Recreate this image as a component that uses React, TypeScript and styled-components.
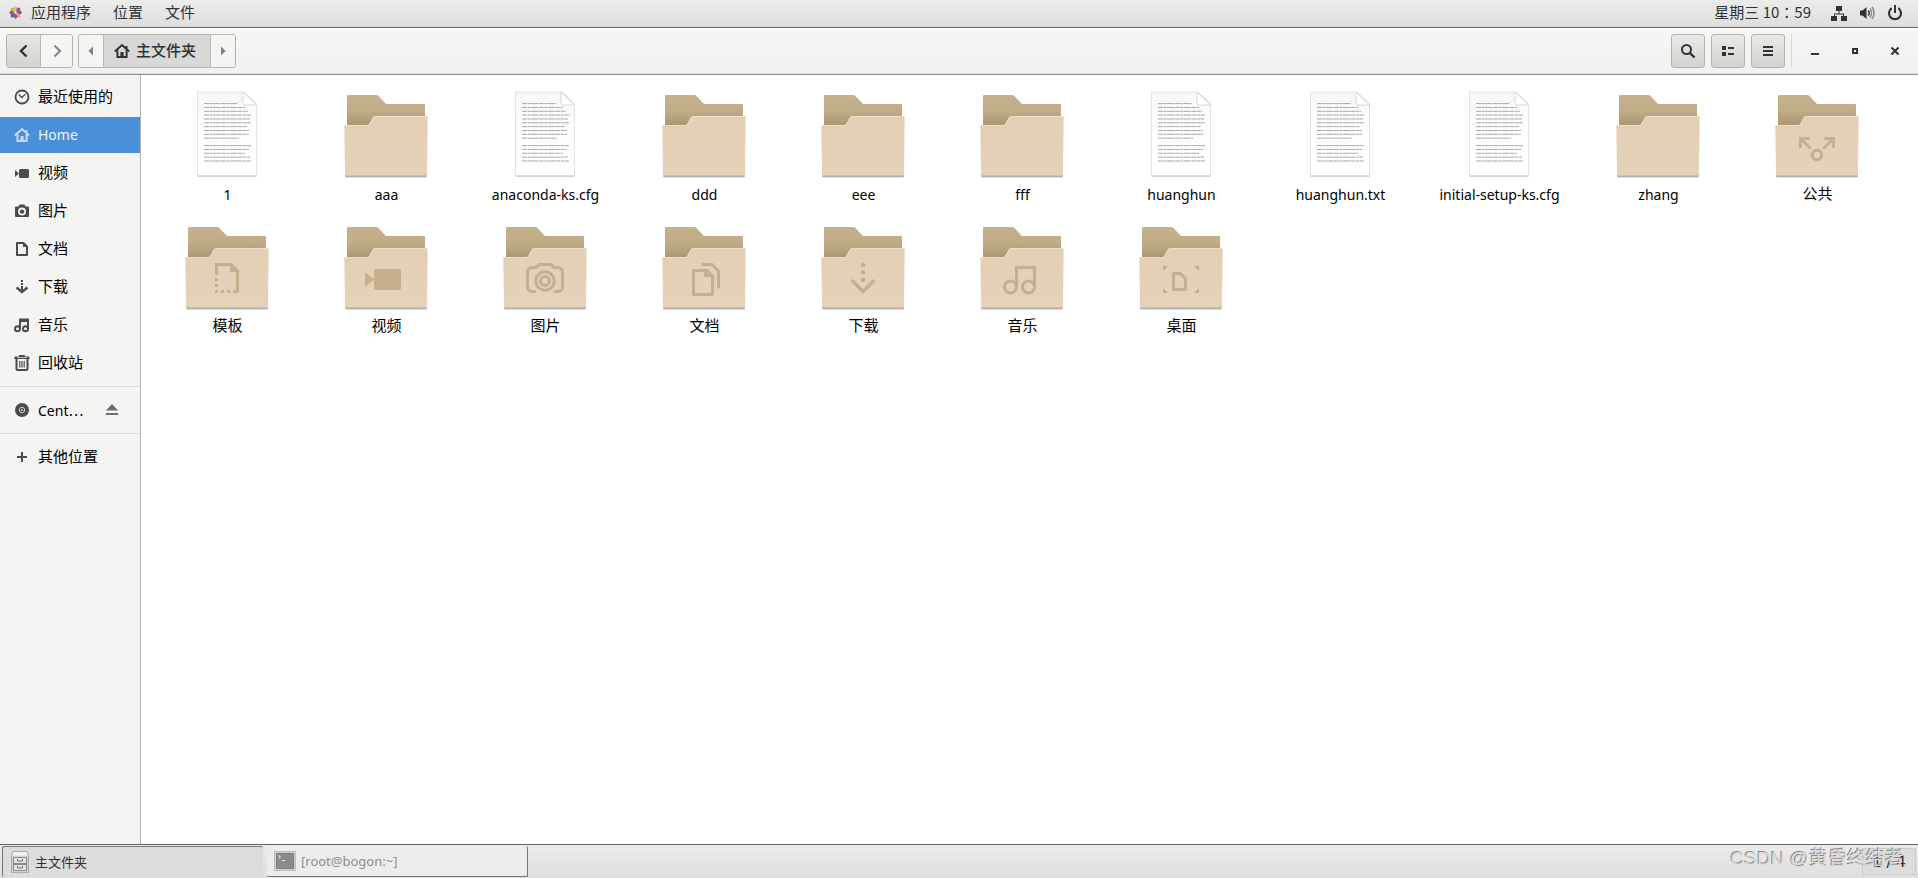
import React from "react";
import styled, { createGlobalStyle } from "styled-components";

const Global = createGlobalStyle`
  *{box-sizing:border-box}
  body{margin:0;background:#fff;color:#000;font:13px/20px "Noto Sans","Noto Sans CJK SC",sans-serif}
  button{font:inherit;color:inherit;margin:0;padding:0;border:0;background:none}
  ul{margin:0;padding:0;list-style:none}
  a{color:inherit;text-decoration:none}
  svg{display:block;flex:none}
`;

const ink = "#2e3436";

const Desktop = styled.div`
  min-height: 100vh;
  display: flex;
  flex-direction: column;
`;
const TopBar = styled.header`
  height: 28px;
  display: flex;
  align-items: center;
  justify-content: space-between;
  padding: 0 15px 2px 8px;
  background: linear-gradient(#ececec, #dedede);
  border-bottom: 1px solid #666263;
  color: ${ink};
  font-size: 15px;
`;
const Label = styled.span`
  padding-bottom: 2px;
`;
const MenuGroup = styled.nav`
  display: flex;
  align-items: center;
  gap: 22px;
`;
const MenuButton = styled.button`
  display: flex;
  align-items: center;
  gap: 8px;
`;
const Status = styled.div`
  display: flex;
  align-items: center;
  gap: 12px;
`;
const Clock = styled.button`
  margin-right: 8px;
  padding-bottom: 2px;
  font-family: "Noto Sans CJK TC", sans-serif;
`;
const HeaderBar = styled.div`
  height: 47px;
  display: flex;
  align-items: center;
  padding: 0 3px 1px 6px;
  background: linear-gradient(#f6f6f5, #f1f1f0);
  border-top: 1px solid #fff;
  border-bottom: 1px solid #8f8f8d;
  box-shadow: inset 0 -1px #dededc;
  color: ${ink};
`;
const Linked = styled.div`
  display: flex;
  height: 34px;
  margin-right: 5px;
  border: 1px solid #b3b3ac;
  border-radius: 3px;
  overflow: hidden;
`;
const LinkedButton = styled.button<{ $w: number; $look?: "raised" | "active" }>`
  width: ${(p) => p.$w}px;
  display: flex;
  align-items: center;
  justify-content: center;
  gap: 6px;
  padding-right: ${(p) => (p.$look === "active" ? 4 : 0)}px;
  font-size: 15px;
  font-weight: 500;
  background: ${(p) =>
    p.$look === "raised"
      ? "linear-gradient(#e6e6e3, #d2d2cf)"
      : p.$look === "active"
      ? "#d8d8d6"
      : "#f4f4f3"};
  & + & {
    border-left: 1px solid #b9b9b3;
  }
`;
const Tools = styled.div`
  margin-left: auto;
  display: flex;
  align-items: center;
  gap: 6px;
`;
const ToolButton = styled.button`
  width: 34px;
  height: 34px;
  display: grid;
  place-items: center;
  border: 1px solid #b3b3ac;
  border-radius: 3px;
  background: linear-gradient(#e9e9e7, #d2d2cf);
`;
const WindowButtons = styled.div`
  height: 34px;
  display: flex;
  border-left: 1px solid #d9d9d6;
  padding-left: 3px;
`;
const WindowButton = styled.button`
  width: 40px;
  display: grid;
  place-items: center;
`;
const Body = styled.div`
  flex: 1;
  display: flex;
`;
const Sidebar = styled.nav`
  width: 141px;
  flex: none;
  padding-top: 4px;
  background: #f4f4f2;
  border-right: 1px solid #b6b6b1;
`;
const Places = styled.ul`
  display: flex;
  flex-direction: column;
  gap: 2px;
  & + & {
    margin-top: 5px;
    padding-top: 5px;
    border-top: 1px solid #dadad8;
  }
`;
const PlaceRow = styled.li<{ $selected?: boolean }>`
  height: 36px;
  display: flex;
  align-items: center;
  justify-content: space-between;
  padding: 0 20px 0 14px;
  background: ${(p) => (p.$selected ? "#4a90d9" : "transparent")};
  color: ${(p) => (p.$selected ? "#eef4fb" : "#000")};
  svg {
    color: ${(p) => (p.$selected ? "#c3daf3" : "#4b4b4b")};
  }
`;
const PlaceLink = styled.a`
  display: flex;
  align-items: center;
  gap: 8px;
`;
const PlaceName = styled.span<{ $latin: boolean }>`
  font-size: ${(p) => (p.$latin ? 14 : 15)}px;
  padding-bottom: ${(p) => (p.$latin ? 0 : 2)}px;
`;
const Dots = styled.span`
  font-family: "Noto Sans CJK SC", sans-serif;
`;
const Files = styled.main`
  flex: 1;
  display: grid;
  grid-template-columns: repeat(auto-fill, minmax(150px, 1fr));
  grid-auto-rows: 132px;
  align-content: start;
  padding: 12px 21px 0 7px;
`;
const FileItem = styled.button`
  display: flex;
  flex-direction: column;
  align-items: center;
  svg {
    margin-right: 1px;
  }
`;
const FileName = styled.span<{ $latin: boolean }>`
  padding-top: ${(p) => (p.$latin ? 2 : 0)}px;
  font-size: ${(p) => (p.$latin ? 14 : 15)}px;
  white-space: nowrap;
`;
const Taskbar = styled.footer`
  height: 34px;
  display: flex;
  align-items: center;
  gap: 4px;
  padding: 0 2px;
  background: linear-gradient(#ececec, #dedede);
  border-top: 1px solid #666263;
  color: ${ink};
`;
const Task = styled.button<{ $active?: boolean }>`
  width: 261px;
  height: 31px;
  display: flex;
  align-items: center;
  gap: 5px;
  padding-left: 7px;
  color: ${(p) => (p.$active ? ink : "#8b8d8e")};
  background: ${(p) => (p.$active ? "#dcdcdc" : "#ededed")};
  border-style: solid;
  border-color: #777576;
  border-width: ${(p) => (p.$active ? "1px 0 0 1px" : "0 1px 1px 0")};
  border-radius: 2px;
`;
const Tray = styled.div`
  margin-left: auto;
  position: relative;
`;
const Pager = styled.button`
  width: 54px;
  height: 27px;
  font: 15px/20px "DejaVu Sans", sans-serif;
  border: 1px solid #cbcbcb;
  background: #dcdcdc;
`;
const Watermark = styled.span`
  position: absolute;
  right: 12px;
  top: -2px;
  font: 19px/26px "Liberation Sans", "Noto Sans CJK SC", sans-serif;
  white-space: nowrap;
  color: #dadada;
  text-shadow: -1px -1px #8a8a8a;
  pointer-events: none;
`;
const Definitions = styled.svg`
  position: absolute;
`;

type IconProps = { children: React.ReactNode };
const Icon = ({ children }: IconProps) => (
  <svg width="16" height="16" viewBox="0 0 16 16" fill="currentColor" aria-hidden="true">
    {children}
  </svg>
);
const line = { fill: "none", stroke: "currentColor", strokeWidth: 2 } as const;

const homeShape = (
  <>
    <path {...line} d="M.8 8.4 8 2l7.2 6.4" />
    <path {...line} d="M3.400 7v7h9.200V7" />
    <path d="M6.400 9h3.200v5H6.400zM11.500 3h2v3l-2-1.500z" />
  </>
);

const placeIcons: Record<string, React.ReactNode> = {
  recent: (
    <>
      <circle cx="8" cy="8" r="6.5" {...line} strokeWidth={1.8} />
      <path {...line} strokeWidth={1.4} d="M4.800 5.600 7.700 8.500 11.300 5.300" />
    </>
  ),
  home: homeShape,
  video: <path d="M1 5v7l4-3.500zM6.500 4h7A1.500 1.500 0 0 1 15 5.500v6a1.500 1.500 0 0 1-1.500 1.500h-7A1.500 1.500 0 0 1 5 11.500v-6A1.500 1.500 0 0 1 6.500 4z" />,
  picture: (
    <>
      <path
        fillRule="evenodd"
        d="M5.500 1.500h5l1 2H14a1 1 0 0 1 1 1V13a1 1 0 0 1-1 1H2a1 1 0 0 1-1-1V4.500a1 1 0 0 1 1-1h2.500zM8 4.600a4 4 0 1 0 0 8 4 4 0 0 0 0-8z"
      />
      <circle cx="8" cy="8.6" r="2.2" />
    </>
  ),
  document: (
    <>
      <path {...line} strokeLinejoin="round" d="M3 2h6.500L13 5.500V14H3z" />
      <path d="M9 1.500V6h4.500z" />
    </>
  ),
  download: (
    <>
      <path d="M7 1h2v2H7zM7 4h2v2H7zM7 7h2v4H7z" />
      <path {...line} strokeWidth={2.4} d="M2.500 8.500 8 13l5.500-4.500" />
    </>
  ),
  music: (
    <>
      <circle cx="3.5" cy="11.7" r="2.5" {...line} />
      <circle cx="11.5" cy="11.7" r="2.5" {...line} />
      <path {...line} d="M6 12V2.500h8V12" />
      <path d="M6 2h8v3H6z" />
    </>
  ),
  trash: (
    <>
      <path d="M1 1.500h3.500L5.500 0h5l1 1.500H15l.8 2.500H.2z" />
      <path fill="#f4f4f2" d="M3 2.300h10v.7H3z" />
      <path {...line} d="M2.500 4v10a1 1 0 0 0 1 1h9a1 1 0 0 0 1-1V4" />
      <path d="M5.200 6h1.200v6.500H5.200zM7.400 6h1.200v6.500H7.400zM9.600 6h1.200v6.500H9.600z" />
    </>
  ),
  disc: (
    <>
      <circle cx="8" cy="8" r="7" />
      <circle cx="8" cy="8" r="2.7" fill="none" stroke="#c9c9c8" />
      <circle cx="8" cy="8" r="1" fill="#c9c9c8" />
    </>
  ),
  plus: <path d="M7 3h2v4h4v2H9v4H7V9H3V7h4z" />,
};

type Place = { icon: string; label: string; cut?: boolean };
const places: Place[][] = [
  [
    { icon: "recent", label: "最近使用的" },
    { icon: "home", label: "Home" },
    { icon: "video", label: "视频" },
    { icon: "picture", label: "图片" },
    { icon: "document", label: "文档" },
    { icon: "download", label: "下载" },
    { icon: "music", label: "音乐" },
    { icon: "trash", label: "回收站" },
  ],
  [{ icon: "disc", label: "Cent", cut: true }],
  [{ icon: "plus", label: "其他位置" }],
];

const emblemColor = "#c7ae8c";
const stroke = { fill: "none", stroke: emblemColor, strokeWidth: 3 } as const;
const emblems: Record<string, React.ReactNode> = {
  share: (
    <>
      <circle cx="48" cy="68" r="4.7" {...stroke} />
      <path {...stroke} d="M31.500 61v-9.500h9M33 53l8.500 8.500M64.500 61v-9.500h-9M63 53l-8.500 8.500" />
    </>
  ),
  template: (
    <>
      <path {...stroke} d="M37.500 56V45.500H52l6.500 6.500v20.500H54" />
      <path fill={emblemColor} d="M51 44v9h9zM36 59h3v3h-3zM36 65h3v3h-3zM36 71h3v3h-3zM42 71h3v3h-3zM48 71h3v3h-3z" />
    </>
  ),
  video: (
    <path fill={emblemColor} d="M27 53v15l9-7.500zM38 50h23a2 2 0 0 1 2 2v17a2 2 0 0 1-2 2H38a2 2 0 0 1-2-2V52a2 2 0 0 1 2-2z" />
  ),
  picture: (
    <>
      <path
        {...stroke}
        strokeLinecap="round"
        d="M38 72.500h-3a4.500 4.500 0 0 1-4.500-4.500V53a4.500 4.500 0 0 1 4.500-4.500h4l3-3h12l3 3h4a4.500 4.500 0 0 1 4.500 4.500v15a4.500 4.500 0 0 1-4.500 4.500h-3"
      />
      <circle cx="48" cy="62" r="9.2" {...stroke} />
      <circle cx="48" cy="62" r="4.5" {...stroke} />
    </>
  ),
  document: (
    <>
      <path {...stroke} strokeLinejoin="round" d="M37.500 51.500H51l5.500 5.500v18.500h-19z" />
      <path fill={emblemColor} d="M48 51v7h8z" />
      <path {...stroke} strokeLinecap="round" d="M47 45.500h9l6.500 6.500v16" />
    </>
  ),
  download: (
    <>
      <g fill={emblemColor}>
        <circle cx="48" cy="46" r="2.3" />
        <circle cx="48" cy="53.5" r="2.3" />
        <circle cx="48" cy="61" r="2.3" />
      </g>
      <path {...stroke} strokeWidth={3.5} strokeLinecap="round" d="M37.500 62 48 72.500 58.500 62" />
    </>
  ),
  music: (
    <>
      <circle cx="36.5" cy="68" r="6" {...stroke} />
      <circle cx="54.5" cy="68" r="6" {...stroke} />
      <path {...stroke} d="M42.500 68V48.500h18V68" />
    </>
  ),
  desktop: (
    <>
      <path fill={emblemColor} d="M30 47h5l-5 5zM66 47v5l-5-5zM30 74v-5l5 5zM66 74h-5l5-5z" />
      <path {...stroke} strokeLinejoin="round" d="M40.500 54.500h7l5 5v11h-12z" />
    </>
  ),
};

const Folder = ({ emblem }: { emblem?: string }) => (
  <svg width="96" height="96" viewBox="0 0 96 96" aria-hidden="true">
    <rect x="7" y="86" width="82" height="5" rx="1.5" fill="#000" opacity=".12" />
    <rect x="7" y="86" width="82" height="4" rx="1.5" fill="#000" opacity=".22" />
    <path fill="url(#folderBack)" d="M10 8h28.500q1 0 1.700.8L48 17h38q1 0 1 1v22H9V9q0-1 1-1z" />
    <path
      fill="url(#folderFront)"
      d="M7.500 38H29q1.500 0 2-1l4-7q.7-1 2-1h51.500q1.200 0 1.200 1.200L89 88q0 1-1 1H8q-1 0-1-1L6.300 39.200Q6.300 38 7.500 38z"
    />
    <path fill="none" stroke="#ecdec9" d="M7.300 38.500H29.500q1.500 0 2-1l4-7q.7-1 2-1h51" />
    <path fill="#d9be9e" d="M7 88h82q0 1-1 1H8q-1 0-1-1z" />
    {emblem && emblems[emblem]}
  </svg>
);

const firstParagraph = [34, 41, 44, 47, 46, 47, 43, 45, 45, 35];
const secondParagraph = [47, 45, 41, 46, 47];
const Document = () => (
  <svg width="96" height="96" viewBox="0 0 96 96" aria-hidden="true">
    <rect x="18" y="5" width="60" height="85" rx="1" fill="#000" opacity=".1" />
    <path fill="#a3a3a3" d="M18.500 88h59v1.200h-59z" />
    <path fill="url(#paper)" stroke="#dededd" strokeWidth=".8" d="M18.500 5H64l13.500 13v70.500h-59z" />
    <path fill="#fff" d="M64.500 4H79v13.500z" />
    <path fill="#fff" stroke="#cfcfce" strokeWidth=".8" d="M64 5v11.500q0 1.500 1.500 1.500h12z" />
    <g stroke="#a6a6a6" strokeWidth="1" strokeDasharray="5 .6 3 .5 7 .6">
      {firstParagraph.map((w, i) => (
        <path key={i} d={`M25 ${16.6 + i * 3.84}h${w}`} />
      ))}
      {secondParagraph.map((w, i) => (
        <path key={i} d={`M25 ${58.6 + i * 3.84}h${w}`} />
      ))}
    </g>
  </svg>
);

const files: [string, "doc" | "folder", string?][] = [
  ["1", "doc"],
  ["aaa", "folder"],
  ["anaconda-ks.cfg", "doc"],
  ["ddd", "folder"],
  ["eee", "folder"],
  ["fff", "folder"],
  ["huanghun", "doc"],
  ["huanghun.txt", "doc"],
  ["initial-setup-ks.cfg", "doc"],
  ["zhang", "folder"],
  ["公共", "folder", "share"],
  ["模板", "folder", "template"],
  ["视频", "folder", "video"],
  ["图片", "folder", "picture"],
  ["文档", "folder", "document"],
  ["下载", "folder", "download"],
  ["音乐", "folder", "music"],
  ["桌面", "folder", "desktop"],
];
const isLatin = (s: string) => /^[\x20-\x7e]+$/.test(s);

const Gradients = () => (
  <Definitions width="0" height="0" aria-hidden="true">
    <defs>
      <linearGradient id="folderBack" x1="0" y1="0" x2="0" y2="1">
        <stop offset="0" stopColor="#c4b18d" />
        <stop offset=".5" stopColor="#c0ac87" />
        <stop offset="1" stopColor="#a8936f" />
      </linearGradient>
      <linearGradient id="folderFront" x1="0" y1="0" x2="0" y2="1">
        <stop offset="0" stopColor="#e4cfb4" />
        <stop offset="1" stopColor="#e4d2b9" />
      </linearGradient>
      <linearGradient id="paper" x1="0" y1="0" x2="0" y2="1">
        <stop offset="0" stopColor="#f6f6f5" />
        <stop offset=".4" stopColor="#fdfdfd" />
        <stop offset="1" stopColor="#fff" />
      </linearGradient>
    </defs>
  </Definitions>
);

const CentosLogo = () => (
  <svg width="15" height="15" viewBox="0 0 16 16" aria-hidden="true">
    <path fill="#e8c55a" d="M8 1l2.500 2.500L8 7 5.500 3.500z" />
    <path fill="#a9cf52" d="M3 3h3.500l1 4.500-4.500-1z" />
    <path fill="#b04c9b" d="M13 3v3.500l-4.500 1 1-4.500zM1 8l2.500-2.500L7 8l-3.500 2.500z" />
    <path fill="#5a5a9c" d="M15 8l-2.500 2.500L9 8l3.500-2.500zM3 9.500l4.500-1-1 4.500H3z" />
    <path fill="#efa744" d="M13 13H9.500l-1-4.500 4.500 1z" />
    <path fill="#b04c9b" d="M8 15l-2.500-2.500L8 9l2.500 3.500z" />
  </svg>
);

export default function App() {
  return (
    <Desktop>
      <Global />
      <Gradients />
      <TopBar>
        <MenuGroup>
          <MenuButton>
            <CentosLogo />
            <Label>应用程序</Label>
          </MenuButton>
          <MenuButton>
            <Label>位置</Label>
          </MenuButton>
          <MenuButton>
            <Label>文件</Label>
          </MenuButton>
        </MenuGroup>
        <Status>
          <Clock>星期三 10：59</Clock>
          <Icon>
            <path d="M5 1h6v5H5zM0 11h6v5H0zM10 11h6v5h-6z" />
            <path d="M7.500 6h1v2.500H13V11h-1V9.500H4V11H3V8.500h4.500z" />
          </Icon>
          <Icon>
            <path d="M1 5.500h2.500L7.500 2v12l-4-3.500H1z" />
            <path {...line} strokeWidth={1.4} d="M9.300 5.500q1.800 2.500 0 5" />
            <path {...line} strokeWidth={1.5} opacity=".5" d="M11 3.500q3.200 4.500 0 9M13 2q4.200 6 0 12" />
          </Icon>
          <Icon>
            <path {...line} strokeWidth={2.2} d="M4.700 3.200a6 6 0 1 0 6.600 0" />
            <path d="M7 0h2v8H7z" />
          </Icon>
        </Status>
      </TopBar>

      <HeaderBar>
        <Linked>
          <LinkedButton $w={33} $look="raised" aria-label="后退">
            <Icon>
              <path {...line} strokeWidth={2.4} d="M10.500 2.500 5 8l5.500 5.500" />
            </Icon>
          </LinkedButton>
          <LinkedButton $w={32} aria-label="前进">
            <Icon>
              <path {...line} opacity=".55" strokeWidth={2.2} d="M5.500 2.500 11 8l-5.500 5.500" />
            </Icon>
          </LinkedButton>
        </Linked>
        <Linked>
          <LinkedButton $w={24} aria-label="上级">
            <Icon>
              <path opacity=".6" d="M10 3.500v9L5.500 8z" />
            </Icon>
          </LinkedButton>
          <LinkedButton $w={107} $look="active">
            <Icon>{homeShape}</Icon>
            <Label>主文件夹</Label>
          </LinkedButton>
          <LinkedButton $w={25} aria-label="下级">
            <Icon>
              <path opacity=".6" d="M6 3.500v9L10.500 8z" />
            </Icon>
          </LinkedButton>
        </Linked>
        <Tools>
          <ToolButton aria-label="搜索">
            <Icon>
              <circle cx="6.5" cy="6.5" r="4.5" {...line} />
              <path {...line} strokeWidth={2.4} d="m9.800 9.800 4.700 4.700" />
            </Icon>
          </ToolButton>
          <ToolButton aria-label="视图">
            <Icon>
              <path d="M2 3h4v4H2zM2 9h4v4H2zM8 4h6v2H8zM8 10h6v2H8z" />
            </Icon>
          </ToolButton>
          <ToolButton aria-label="菜单">
            <Icon>
              <path d="M3 3h10v2H3zM3 7h10v2H3zM3 11h10v2H3z" />
            </Icon>
          </ToolButton>
          <WindowButtons>
            <WindowButton aria-label="最小化">
              <Icon>
                <path d="M4 10h8v2H4z" />
              </Icon>
            </WindowButton>
            <WindowButton aria-label="还原">
              <Icon>
                <path {...line} d="M6 6h4v4H6z" />
              </Icon>
            </WindowButton>
            <WindowButton aria-label="关闭">
              <Icon>
                <path {...line} d="m4.500 4.500 7 7m0-7-7 7" />
              </Icon>
            </WindowButton>
          </WindowButtons>
        </Tools>
      </HeaderBar>

      <Body>
        <Sidebar>
          {places.map((group, i) => (
            <Places key={i}>
              {group.map(({ icon, label, cut }) => (
                <PlaceRow key={label} $selected={icon === "home"}>
                  <PlaceLink href="#">
                    <Icon>{placeIcons[icon]}</Icon>
                    <PlaceName $latin={isLatin(label)}>
                      {label}
                      {cut && <Dots>⋯</Dots>}
                    </PlaceName>
                  </PlaceLink>
                  {cut && (
                    <button aria-label="弹出">
                      <Icon>
                        <path opacity=".8" d="M8 2l6 6.500H2zM2 11h12v2H2z" />
                      </Icon>
                    </button>
                  )}
                </PlaceRow>
              ))}
            </Places>
          ))}
        </Sidebar>
        <Files>
          {files.map(([name, kind, emblem]) => (
            <FileItem key={name}>
              {kind === "doc" ? <Document /> : <Folder emblem={emblem} />}
              <FileName $latin={isLatin(name)}>{name}</FileName>
            </FileItem>
          ))}
        </Files>
      </Body>

      <Taskbar>
        <Task $active>
          <svg width="20" height="22" viewBox="0 0 20 22" aria-hidden="true">
            <path fill="#d0d2ce" stroke="#a9aba7" d="M3 .5h14l1.500 4v17h-17v-17z" />
            <path fill="#f4f5f3" d="M3.500 1h13l1 3.500h-15z" />
            <path fill="#e3e4e1" stroke="#8a8c88" d="M3.500 6.500h13v6h-13zM3.500 13.500h13v6h-13z" />
            <path fill="none" stroke="#6e706c" d="M7.500 8v2h5V8M7.500 15v2h5v-2" />
          </svg>
          主文件夹
        </Task>
        <Task>
          <svg width="22" height="22" viewBox="0 0 22 22" aria-hidden="true">
            <path fill="#d4d5d3" stroke="#bcbdbb" d="M.5 1.500h21v19H.5z" />
            <path fill="#8a8c8a" stroke="#7c7e7c" d="M2.500 3.500h17v15h-17z" />
            <path fill="none" stroke="#e8e8e8" d="m4.500 5.500 2 1.500-2 1.500M8 10.500h3" />
          </svg>
          [root@bogon:~]
        </Task>
        <Tray>
          <Pager>1 / 4</Pager>
          <Watermark>CSDN @黄昏终结者</Watermark>
        </Tray>
      </Taskbar>
    </Desktop>
  );
}
